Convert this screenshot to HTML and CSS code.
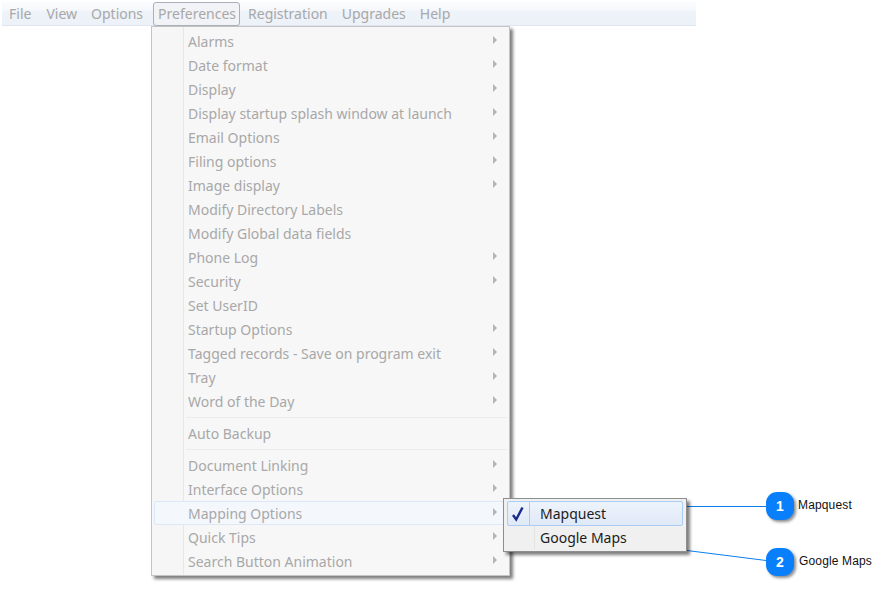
FILE: index.html
```html
<!DOCTYPE html>
<html lang="en">
<head>
<meta charset="utf-8">
<title>Preferences menu</title>
<link rel="stylesheet" href="styles.css">
</head>
<body>
<nav class="menubar">
  <span class="top">File</span>
  <span class="top">View</span>
  <span class="top">Options</span>
  <span class="top open">Preferences</span>
  <span class="top">Registration</span>
  <span class="top">Upgrades</span>
  <span class="top">Help</span>
</nav>

<div class="menu main">
  <div class="item sub">Alarms</div>
  <div class="item sub">Date format</div>
  <div class="item sub">Display</div>
  <div class="item sub">Display startup splash window at launch</div>
  <div class="item sub">Email Options</div>
  <div class="item sub">Filing options</div>
  <div class="item sub">Image display</div>
  <div class="item">Modify Directory Labels</div>
  <div class="item">Modify Global data fields</div>
  <div class="item sub">Phone Log</div>
  <div class="item sub">Security</div>
  <div class="item">Set UserID</div>
  <div class="item sub">Startup Options</div>
  <div class="item sub">Tagged records - Save on program exit</div>
  <div class="item sub">Tray</div>
  <div class="item sub">Word of the Day</div>
  <div class="sep"></div>
  <div class="item">Auto Backup</div>
  <div class="sep"></div>
  <div class="item sub">Document Linking</div>
  <div class="item sub">Interface Options</div>
  <div class="item sub hover">Mapping Options</div>
  <div class="item sub">Quick Tips</div>
  <div class="item sub">Search Button Animation</div>
</div>

<div class="menu submenu">
  <div class="subitem active">
    <span class="check"><svg width="14" height="16" viewBox="0 0 14 16"><path d="M2 9 L5.2 13.5 L11.5 1.5" fill="none" stroke="#1a2a8c" stroke-width="2.4"/></svg></span>
    Mapquest
  </div>
  <div class="subitem"><span class="check"></span>Google Maps</div>
</div>

<svg class="leaders" width="876" height="599" viewBox="0 0 876 599">
  <line x1="687" y1="506.5" x2="770" y2="506.5" stroke="#0a7fee" stroke-width="1"/>
  <line x1="687" y1="550.5" x2="770" y2="561" stroke="#0a7fee" stroke-width="1"/>
</svg>

<div class="badge b1">1</div>
<div class="note n1">Mapquest</div>
<div class="badge b2">2</div>
<div class="note n2">Google Maps</div>
</body>
</html>
```
FILE: styles.css
```css
html, body {
  margin: 0;
  padding: 0;
  background: #fff;
}
body {
  position: relative;
  width: 876px;
  height: 599px;
  overflow: hidden;
  font-family: "Noto Sans", "Open Sans", sans-serif;
  font-size: 14px;
}
.menubar {
  display: flex;
  align-items: center;
  box-sizing: border-box;
  width: 694px;
  height: 24px;
  margin: 2px 0 0 2px;
  padding-left: 2px;
  background: linear-gradient(#fbfcfe 0, #f7f9fc 30%, #eef2f9 45%, #edf1f8 100%);
  border-bottom: 1px solid #dfe5ee;
}
.top {
  box-sizing: border-box;
  height: 24px;
  line-height: 24px;
  padding: 0 5px;
  margin-right: 4px;
  color: #a8a8a8;
}
.top:first-child {
  padding-right: 6px;
}
.top.open {
  height: 24px;
  line-height: 22px;
  margin: 1px 3px 0 1px;
  background: #f2f3f6;
  border: 1px solid #a9b0b8;
  border-radius: 3px;
  padding: 0 3px 0 4px;
}
.menu {
  position: absolute;
  box-sizing: border-box;
  background: #f6f6f6;
  border: 1px solid #a0a0a0;
  box-shadow: 3px 3px 3px rgba(0, 0, 0, 0.5);
}
.main {
  z-index: 0;
  left: 151px;
  top: 26px;
  width: 359px;
  height: 550px;
  padding: 3px 2px;
  border-color: #c4c4c4;
  background: linear-gradient(to right, #f6f6f6 31px, #e8e8e8 31px, #e8e8e8 32px, #f7f7f7 32px);
}
.item {
  position: relative;
  box-sizing: border-box;
  height: 24px;
  line-height: 23px;
  padding-left: 34px;
  color: #a8a8a8;
  white-space: nowrap;
}
.item.sub::after {
  content: "";
  position: absolute;
  right: 10px;
  top: 6px;
  border-left: 4px solid #b4b4b4;
  border-top: 4px solid transparent;
  border-bottom: 4px solid transparent;
}
.item.hover::before {
  content: "";
  position: absolute;
  z-index: -1;
  left: 0;
  right: 0;
  top: -1px;
  height: 24px;
  box-sizing: border-box;
  background: #f4f7fc;
  border: 1px solid #dde8f6;
  border-radius: 2px;
}
.sep {
  height: 8px;
  background: linear-gradient(#0000 3px, #ececec 3px, #ececec 4px, #0000 4px);
  margin-left: 32px;
}
.submenu {
  left: 503px;
  top: 498px;
  width: 184px;
  height: 54px;
  padding: 2px 3px;
  border-color: #8e8e8e;
  background: #f0f0f0;
  z-index: 2;
}
.subitem {
  display: flex;
  align-items: center;
  box-sizing: border-box;
  height: 23px;
  width: 176px;
  color: #1c1c1c;
  white-space: nowrap;
}
.subitem.active {
  height: 25px;
  background: linear-gradient(#eef3fb, #e0e9f7);
  border: 1px solid #a9cdf5;
  border-radius: 2px;
}
.check {
  display: flex;
  align-items: center;
  justify-content: center;
  box-sizing: border-box;
  width: 28px;
  height: 100%;
  margin-right: 5px;
  border-right: 1px solid #e3e3e3;
}
.active .check {
  width: 23px;
  margin: 0 10px 0 -1px;
  border-right-color: #a9cdf5;
}
.leaders {
  position: absolute;
  left: 0;
  top: 0;
}
.badge {
  position: absolute;
  box-sizing: border-box;
  width: 28px;
  height: 28px;
  border-radius: 11px;
  background: #0a7ffb;
  color: #fff;
  font: bold 14px/28px "Liberation Sans", sans-serif;
  text-align: center;
  box-shadow: 2px 2px 3px rgba(0, 0, 0, 0.45);
}
.b1 { left: 766px; top: 492px; }
.b2 { left: 766px; top: 548px; }
.note {
  position: absolute;
  font: 12px/14px "Liberation Sans", sans-serif;
  letter-spacing: 0.15px;
  color: #111;
}
.n1 { left: 798px; top: 498px; }
.n2 { left: 799px; top: 554px; }
```
